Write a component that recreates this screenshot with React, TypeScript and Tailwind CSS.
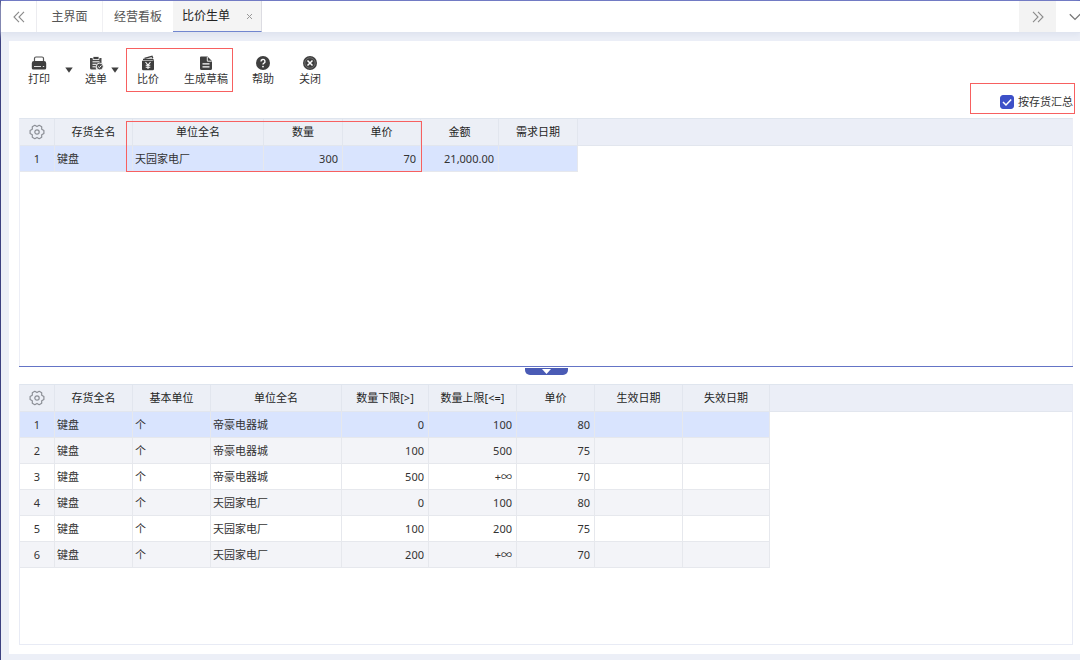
import React, { useState } from 'react';

interface Column {
  title: string;
  width: number;
  align?: 'left' | 'right';
}

interface GridProps {
  label: string;
  columns: Column[];
  rows: string[][];
}

const summaryColumns: Column[] = [
  { title: '存货全名', width: 78 },
  { title: '单位全名', width: 131 },
  { title: '数量', width: 79, align: 'right' },
  { title: '单价', width: 78, align: 'right' },
  { title: '金额', width: 78, align: 'right' },
  { title: '需求日期', width: 79 },
];

const summaryRows = [['键盘', '天园家电厂', '300', '70', '21,000.00', '']];

const priceColumns: Column[] = [
  { title: '存货全名', width: 78 },
  { title: '基本单位', width: 78 },
  { title: '单位全名', width: 131 },
  { title: '数量下限[>]', width: 87, align: 'right' },
  { title: '数量上限[<=]', width: 88, align: 'right' },
  { title: '单价', width: 78, align: 'right' },
  { title: '生效日期', width: 88 },
  { title: '失效日期', width: 87 },
];

const priceRows = [
  ['键盘', '个', '帝豪电器城', '0', '100', '80', '', ''],
  ['键盘', '个', '帝豪电器城', '100', '500', '75', '', ''],
  ['键盘', '个', '帝豪电器城', '500', '+∞', '70', '', ''],
  ['键盘', '个', '天园家电厂', '0', '100', '80', '', ''],
  ['键盘', '个', '天园家电厂', '100', '200', '75', '', ''],
  ['键盘', '个', '天园家电厂', '200', '+∞', '70', '', ''],
];

const PrintIcon = () => (
  <svg width="16" height="16" viewBox="0 0 16 16" fill="none" aria-hidden="true">
    <path d="M3.5 7V3.5A1.500 1.500 0 0 1 5 2h6a1.500 1.500 0 0 1 1.500 1.500V7" stroke="#555" strokeWidth="1.200" />
    <path d="M3 6h10a2.200 2.200 0 0 1 2.200 2.200V13a1.500 1.500 0 0 1-1.500 1.500H2.300A1.500 1.500 0 0 1 .8 13V8.200A2.200 2.200 0 0 1 3 6Z" fill="#3f3f3f" />
    <path d="M3 11.500h7" stroke="#ddd" />
    <path d="M11.800 11.500h1.400" stroke="#ddd" />
  </svg>
);

const PickIcon = () => (
  <svg width="16" height="16" viewBox="0 0 16 16" fill="none" aria-hidden="true">
    <path d="M2 3h11.500v5.500a4 4 0 0 0-5 6h-5A1.500 1.500 0 0 1 2 13V3Z" fill="#4a4a4a" />
    <path d="M5 1.500h6v3H5z" fill="#3f3f3f" stroke="#fff" strokeWidth=".8" />
    <path d="M4.500 6.800h7M4.500 9.300h4M4.500 11.800h3" stroke="#fff" />
    <circle cx="11.800" cy="11.500" r="3.400" fill="#4a4a4a" stroke="#fff" strokeWidth=".8" />
    <path d="m10.200 11.500 1.200 1.200 2-2.200" stroke="#fff" />
  </svg>
);

const CompareIcon = () => (
  <svg width="16" height="16" viewBox="0 0 16 16" fill="none" aria-hidden="true">
    <path d="m4.500 3.300 7.500-2 .8 2" stroke="#3f3f3f" strokeWidth="1.300" />
    <path d="M3 4.500h9.500l1.200 1" stroke="#3f3f3f" strokeWidth="1.300" />
    <path d="M2 5.800h12V14a1.200 1.200 0 0 1-1.200 1.200H3.200A1.200 1.200 0 0 1 2 14V5.800Z" fill="#3f3f3f" />
    <path d="m5.500 7 2.500 3 2.500-3M8 10v4M5.700 10.300h4.600M5.700 12.200h4.600" stroke="#fff" strokeWidth="1.100" />
  </svg>
);

const DraftIcon = () => (
  <svg width="16" height="16" viewBox="0 0 16 16" fill="none" aria-hidden="true">
    <path d="M3 1.500h6.500L14 6v7.500a1.500 1.500 0 0 1-1.500 1.500h-9A1.500 1.500 0 0 1 2 13.500v-11a1 1 0 0 1 1-1Z" fill="#3f3f3f" />
    <path d="M9.300 2v4.200h4.500" stroke="#fff" strokeWidth=".9" />
    <path d="M4.500 8.800h7M4.500 11.800h7" stroke="#fff" strokeWidth="1.200" />
  </svg>
);

const HelpIcon = () => (
  <svg width="16" height="16" viewBox="0 0 16 16" fill="none" aria-hidden="true">
    <circle cx="8" cy="8" r="7" fill="#3f3f3f" />
    <path d="M6 6.500A2 2 0 1 1 8.700 8.300C8.200 8.600 8 8.900 8 9.600" stroke="#fff" strokeWidth="1.400" />
    <circle cx="8" cy="11.600" r=".9" fill="#fff" />
  </svg>
);

const CloseIcon = () => (
  <svg width="16" height="16" viewBox="0 0 16 16" fill="none" aria-hidden="true">
    <circle cx="8" cy="8" r="7" fill="#3f3f3f" />
    <circle cx="8" cy="8" r="5.200" stroke="#8a8a8a" strokeWidth=".6" />
    <path d="m5.500 5.500 5 5M10.500 5.500l-5 5" stroke="#fff" strokeWidth="1.500" />
  </svg>
);

const GearIcon = () => (
  <svg width="16" height="16" viewBox="0 0 16 16" fill="none" stroke="#8c8f96" strokeWidth="1.200" strokeLinejoin="round" aria-hidden="true">
    <path d="M14.900 6.600v2.800l-2.200 1.300v2.600l-2.500 1.400L8 13.400l-2.200 1.300-2.500-1.400v-2.600L1.100 9.400V6.600l2.200-1.300V2.700l2.500-1.400L8 2.600l2.200-1.300 2.500 1.400v2.600Z" />
    <circle cx="8" cy="8" r="2.200" />
  </svg>
);

const DoubleChevron = ({ flip = false }: { flip?: boolean }) => (
  <svg width="12" height="12" viewBox="0 0 12 12" fill="none" stroke="#8a8a8a" strokeWidth="1.100" aria-hidden="true">
    {flip ? <path d="m1 .8 5 5.200-5 5.200M6 .8 11 6l-5 5.200" /> : <path d="M6 .8 1 6l5 5.200M11 .8 6 6l5 5.200" />}
  </svg>
);

const ToolButton: React.FC<{ text: string; icon: React.ReactNode; wide?: boolean }> = ({ text, icon, wide }) => (
  <button type="button" className={`flex flex-col items-center gap-[2px] whitespace-nowrap ${wide ? 'w-11' : 'w-6'}`}>
    {icon}
    <span className="text-[11px] leading-3">{text}</span>
  </button>
);

const DropArrow = ({ label }: { label: string }) => (
  <button type="button" aria-label={label} className="flex h-8 w-[14px] items-center justify-center">
    <svg width="8" height="6" viewBox="0 0 8 6" aria-hidden="true">
      <path d="M.3.500h7.400L4 5.700Z" fill="#3f3f3f" />
    </svg>
  </button>
);

const Grid: React.FC<GridProps> = ({ label, columns, rows }) => {
  const [selected, setSelected] = useState(0);

  const rowColor = (index: number) => {
    if (index === selected) return 'bg-[#d9e4fe]';
    return index % 2 === 1 ? 'bg-[#f3f4f8]' : 'bg-white';
  };

  return (
    <table aria-label={label} className="w-full table-fixed border-separate border-spacing-0 text-[11px] leading-4">
      <colgroup>
        <col className="w-[35px]" />
        {columns.map((column) => (
          <col key={column.title} style={{ width: column.width }} />
        ))}
        <col />
      </colgroup>
      <thead>
        <tr className="h-[27px] bg-[#eceff6] text-[#1f1f1f]">
          <th className="border-r border-b border-[#e2e6ee] p-0">
            <button type="button" aria-label="列设置" className="flex w-full items-center justify-center">
              <GearIcon />
            </button>
          </th>
          {columns.map((column) => (
            <th key={column.title} className="border-r border-b border-[#e2e6ee] p-0 font-normal whitespace-nowrap">
              {column.title}
            </th>
          ))}
          <td className="border-b border-[#e2e6ee] bg-[#ebeef7] p-0" />
        </tr>
      </thead>
      <tbody>
        {rows.map((row, index) => (
          <tr key={index} className="h-[26px] text-[#333]" onClick={() => setSelected(index)}>
            <td className={`border-r border-b border-[#e6e8ed] p-0 text-center ${rowColor(index)}`}>{index + 1}</td>
            {columns.map((column, i) => (
              <td
                key={column.title}
                className={`border-r border-b border-[#e6e8ed] py-0 pr-1 pl-[2px] whitespace-nowrap ${rowColor(index)} ${
                  column.align === 'right' ? 'text-right' : 'text-left'
                }`}
              >
                {row[i]}
              </td>
            ))}
            <td className="p-0" />
          </tr>
        ))}
      </tbody>
    </table>
  );
};

const TabBar = () => (
  <nav className="flex h-8 border-b border-[#e0e5f0] bg-white text-xs text-[#555] shadow-[0_2px_6px_#dde2ee]">
    <button type="button" aria-label="向左滚动" className="flex w-9 items-center justify-center border-r border-[#ececf0]">
      <DoubleChevron />
    </button>
    <button type="button" className="w-[66px] border-r border-[#f0f0f3]">主界面</button>
    <button type="button" className="w-[70px]">经营看板</button>
    <div className="flex w-[89px] items-center justify-between border-r border-b border-[#dcdce2] border-b-[#7186cf] bg-[#f4f4f4] pr-2 pl-[9px]">
      <button type="button" className="h-full text-[#222]">比价生单</button>
      <button type="button" aria-label="关闭标签" className="text-[#999]">
        <svg width="7" height="7" viewBox="0 0 7 7" stroke="currentColor" aria-hidden="true">
          <path d="m1 1 5 5M6 1 1 6" />
        </svg>
      </button>
    </div>
    <div className="flex-1" />
    <button type="button" aria-label="向右滚动" className="flex w-[37px] items-center justify-center bg-[#f3f3f3]">
      <DoubleChevron flip />
    </button>
    <button type="button" aria-label="更多标签" className="flex w-6 items-center overflow-hidden pl-[13px]">
      <svg width="12" height="8" viewBox="0 0 12 8" fill="none" stroke="#777" strokeWidth="1.300" className="shrink-0" aria-hidden="true">
        <path d="m.8 1.200 5.200 5.200 5.200-5.200" />
      </svg>
    </button>
  </nav>
);

const App: React.FC = () => {
  const [grouped, setGrouped] = useState(true);

  return (
    <div className="flex min-h-screen flex-col border-t border-l border-t-[#5560b8] border-l-[#3c4180] bg-[#eceff7] font-['Noto_Sans','Noto_Sans_CJK_SC',sans-serif] text-[#333]">
      <TabBar />
      <main className="mt-2 mb-[6px] ml-2 flex flex-1 flex-col bg-white pr-[7px] pb-[9px] pl-[10px]">
        <div className="flex h-[77px] items-start justify-between">
          <div className="mt-[7px] ml-2 flex h-11 items-center">
            <ToolButton text="打印" icon={<PrintIcon />} />
            <div className="ml-[11px]">
              <DropArrow label="打印选项" />
            </div>
            <div className="ml-2">
              <ToolButton text="选单" icon={<PickIcon />} />
            </div>
            <DropArrow label="选单选项" />
            <div className="ml-1 flex h-11 items-center gap-6 border border-[#f76060] pr-1 pl-[9px]">
              <ToolButton text="比价" icon={<CompareIcon />} />
              <ToolButton text="生成草稿" icon={<DraftIcon />} wide />
            </div>
            <div className="ml-[18px] flex gap-[23px]">
              <ToolButton text="帮助" icon={<HelpIcon />} />
              <ToolButton text="关闭" icon={<CloseIcon />} />
            </div>
          </div>
          <label className="-mr-[2px] mb-1 flex h-[31px] w-[105px] items-end justify-end gap-1 self-end border border-[#f76060] pr-px pb-1 text-[11px] leading-[14px] whitespace-nowrap">
            <span className="grid">
              <input
                type="checkbox"
                checked={grouped}
                onChange={(e) => setGrouped(e.target.checked)}
                className="col-start-1 row-start-1 size-[14px] appearance-none rounded-[3px] border border-[#3d50c8] bg-white checked:bg-[#3d50c8]"
              />
              <svg width="14" height="14" viewBox="0 0 14 14" fill="none" className="pointer-events-none col-start-1 row-start-1" aria-hidden="true">
                <path d="m3 7 3 3 5.200-5.500" stroke="#fff" strokeWidth="1.500" />
              </svg>
            </span>
            按存货汇总
          </label>
        </div>

        <section className="relative min-h-[248px] border-x border-t border-x-[#eceef6] border-t-[#dfe5ee]">
          <Grid label="比价汇总" columns={summaryColumns} rows={summaryRows} />
          <div className="pointer-events-none absolute top-[2px] left-[106px] h-[51px] w-[296px] border border-[#f76060]" />
        </section>

        <div className="flex h-[18px] items-start justify-center border-t border-[#6474c6]">
          <button type="button" aria-label="收起下方表格" className="mt-px flex h-[7px] w-[43px] items-center justify-center rounded-b-[5px] bg-[#4a5bb5]">
            <svg width="9" height="5" viewBox="0 0 9 5" aria-hidden="true">
              <path d="M0 0h9L4.500 5Z" fill="#fff" />
            </svg>
          </button>
        </div>

        <section className="flex-1 border border-[#e8ebf5] border-t-[#dfe5ee]">
          <Grid label="价格明细" columns={priceColumns} rows={priceRows} />
        </section>
      </main>
    </div>
  );
};

export default App;
